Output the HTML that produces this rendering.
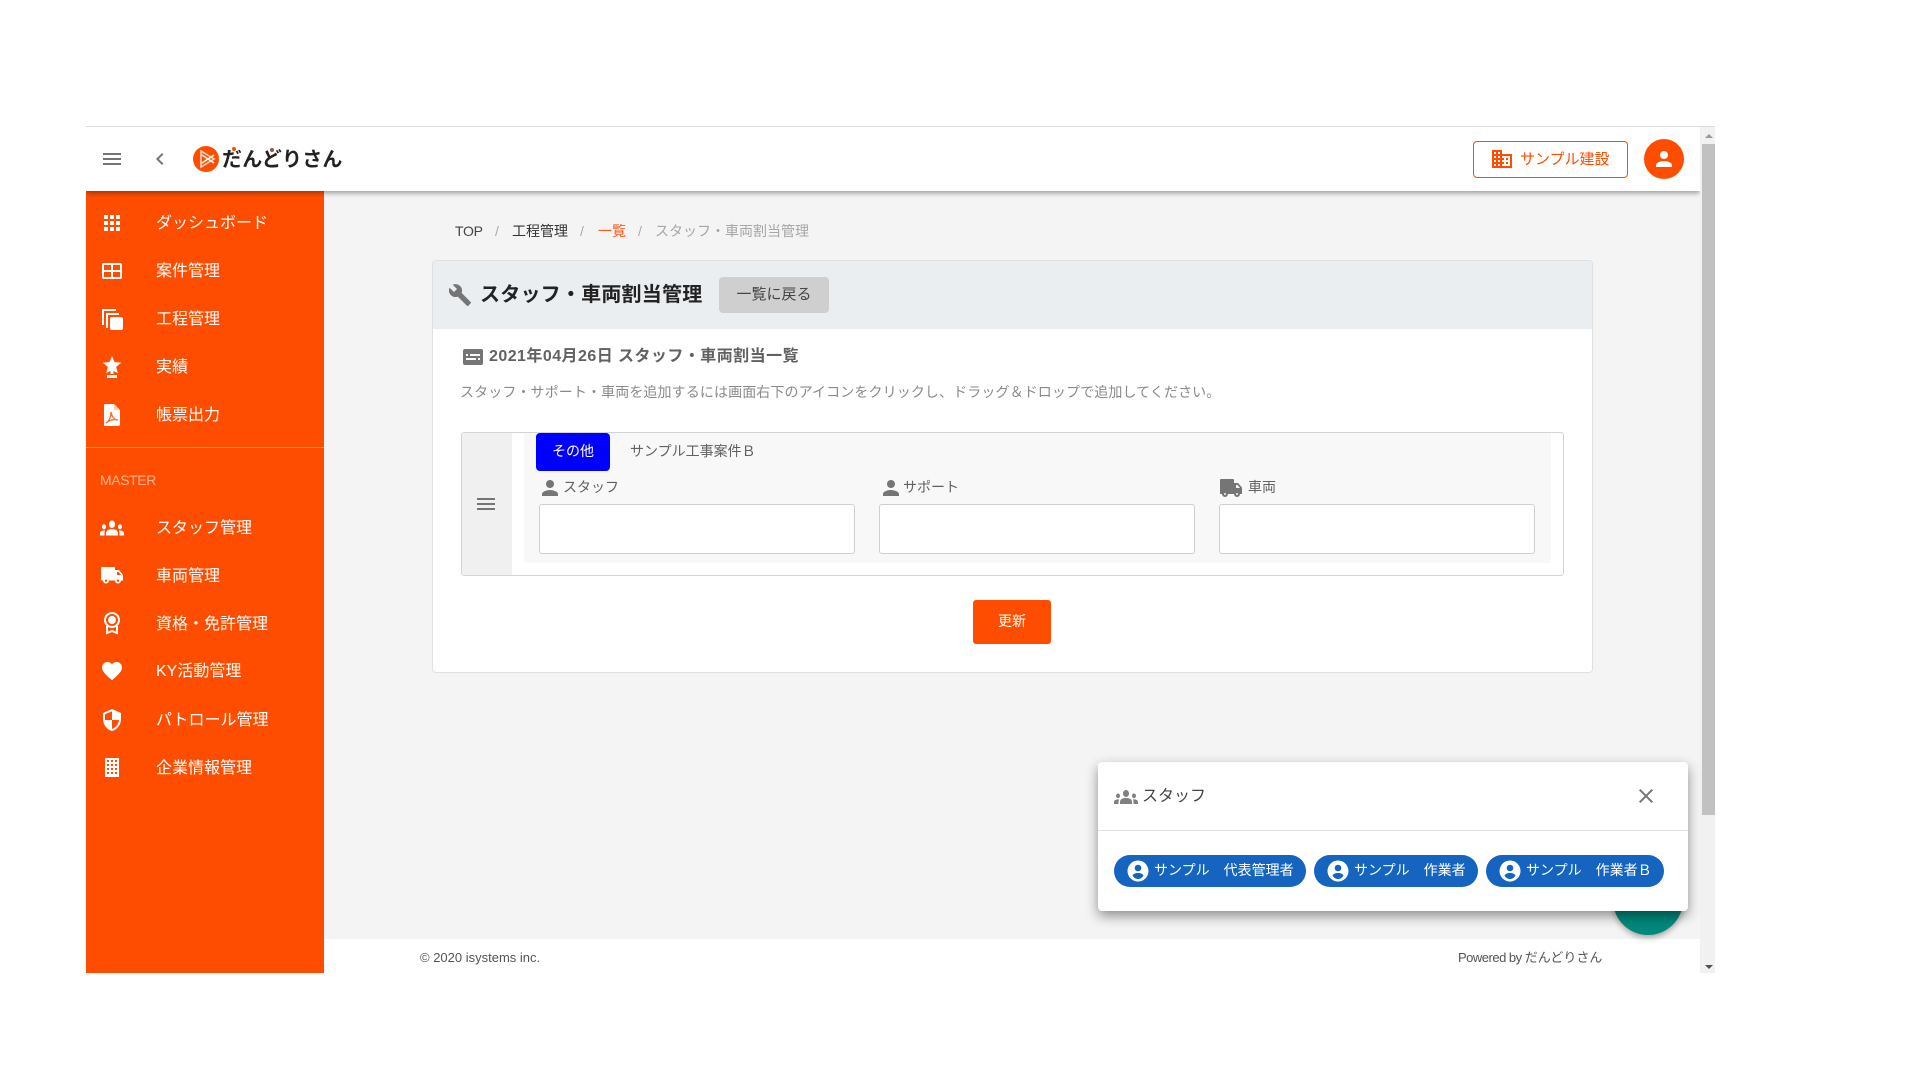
<!DOCTYPE html>
<html lang="ja"><head><meta charset="utf-8"><title>スタッフ・車両割当管理</title>
<style>
html,body{margin:0;padding:0;width:1920px;height:1080px;overflow:hidden;background:#fff}
body{position:relative;font-family:"Liberation Sans","Noto Sans CJK JP",sans-serif;color:#333}
div,span,svg{position:absolute}
.t{white-space:nowrap;line-height:20px;height:20px}
.n{left:156px;color:#fff;font-size:16px}
.i{fill:#fff}
.g{fill:#757575}
i{font-style:normal}
</style></head><body>
<!-- frame -->
<div style="left:86px;top:126px;width:1629px;height:1px;background:#dcdcdc"></div>
<div style="left:324px;top:191px;width:1376px;height:748px;background:#f4f4f4"></div>
<div style="left:324px;top:939px;width:1376px;height:34px;background:#fff"></div>
<!-- scrollbar -->
<div style="left:1700px;top:127px;width:15px;height:846px;background:#f1f1f1"></div>
<div style="left:1702px;top:144px;width:13px;height:671px;background:#c1c1c1"></div>
<div style="left:1705px;top:134px;width:0;height:0;border-left:4px solid transparent;border-right:4px solid transparent;border-bottom:4px solid #9a9a9a"></div>
<div style="left:1705px;top:965px;width:0;height:0;border-left:4px solid transparent;border-right:4px solid transparent;border-top:4px solid #505050"></div>
<!-- sidebar -->
<div style="left:86px;top:191px;width:238px;height:782px;background:#ff4d00"></div>
<div style="left:86px;top:447px;width:238px;height:1px;background:#ff8a5c"></div>
<!-- header -->
<div style="left:86px;top:127px;width:1614px;height:64px;background:#fff;box-shadow:0 2px 5px rgba(0,0,0,.38);clip-path:inset(0 0 -12px 0)"></div>
<svg style="left:100px;top:147px" width="24" height="24" viewBox="0 0 24 24" class="g"><path d="M3 18h18v-2H3v2zm0-5h18v-2H3v2zm0-7v2h18V6H3z"/></svg>
<svg style="left:148px;top:147px" width="24" height="24" viewBox="0 0 24 24" class="g"><path d="M15.41 7.41L14 6l-6 6 6 6 1.41-1.41L10.83 12z"/></svg>
<svg style="left:193px;top:146px" width="26" height="26" viewBox="0 0 26 26"><circle cx="13" cy="13" r="13" fill="#ff4d00"/><path d="M8 5v16l13-8z" fill="none" stroke="#ffd8c4" stroke-width="1.6"/><path d="M9 9l12 8M9 17l12-8" stroke="#fff" stroke-width="1.5"/></svg>
<div class="t" style="left:222px;top:148px;font-size:20px;font-weight:700;color:#222;line-height:24px;height:24px;letter-spacing:.2px">だんどりさん</div>
<div style="left:232px;top:147px;width:4px;height:4px;border-radius:50%;background:#ff4d00"></div>
<div style="left:270px;top:148px;width:4px;height:4px;border-radius:50%;background:#8a5a44"></div>
<div style="left:1473px;top:141px;width:153px;height:35px;border:1px solid #ff4d00;border-radius:4px;background:#fff"></div>
<svg style="left:1490px;top:147px" width="24" height="24" viewBox="0 0 24 24" fill="#ff4d00"><path d="M12 7V3H2v18h20V7H12zM6 19H4v-2h2v2zm0-4H4v-2h2v2zm0-4H4V9h2v2zm0-4H4V5h2v2zm4 12H8v-2h2v2zm0-4H8v-2h2v2zm0-4H8V9h2v2zm0-4H8V5h2v2zm10 12h-8v-2h2v-2h-2v-2h2v-2h-2V9h8v10zm-2-8h-2v2h2v-2zm0 4h-2v2h2v-2z"/></svg>
<div class="t" style="left:1520px;top:150px;font-size:15px;color:#ff4d00">サンプル建設</div>
<div style="left:1644px;top:139px;width:40px;height:40px;border-radius:50%;background:#ff4d00"></div>
<svg style="left:1652px;top:147px" width="24" height="24" viewBox="0 0 24 24" class="i"><path d="M12 12c2.21 0 4-1.79 4-4s-1.79-4-4-4-4 1.79-4 4 1.79 4 4 4zm0 2c-2.67 0-8 1.34-8 4v2h16v-2c0-2.66-5.33-4-8-4z"/></svg>
<!-- nav -->
<svg style="left:100px;top:211px" width="24" height="24" viewBox="0 0 24 24" class="i"><path d="M4 8h4V4H4v4zm6 12h4v-4h-4v4zm-6 0h4v-4H4v4zm0-6h4v-4H4v4zm6 0h4v-4h-4v4zm6-10v4h4V4h-4zm-6 4h4V4h-4v4zm6 6h4v-4h-4v4zm0 6h4v-4h-4v4z"/></svg>
<div class="t n" style="top:214px">ダッシュボード</div>
<svg style="left:100px;top:259px" width="24" height="24" viewBox="0 0 24 24" class="i"><path fill-rule="evenodd" d="M4 4h16a2 2 0 0 1 2 2v12a2 2 0 0 1-2 2H4a2 2 0 0 1-2-2V6a2 2 0 0 1 2-2zm0 2v5h7V6H4zm9 0v5h7V6h-7zM4 13v5h7v-5H4zm9 0v5h7v-5h-7z"/></svg>
<div class="t n" style="top:262px">案件管理</div>
<svg style="left:100px;top:307px" width="24" height="24" viewBox="0 0 24 24" class="i"><path d="M2 2h14v2H4v14H2zM6 6h13v2H8v13H6z"/><rect x="10" y="10" width="13" height="13" rx="2"/></svg>
<div class="t n" style="top:310px">工程管理</div>
<svg style="left:100px;top:355px" width="24" height="24" viewBox="0 0 24 24" class="i"><path d="M12 1l2.600 6.100 6.600.5-5 4.300 1.500 6.400-5.700-3.400-5.700 3.400 1.500-6.400-5-4.300 6.600-.5z"/><path d="M10.500 15h3v4h-3z"/><path d="M7 20h10v3H7z"/></svg>
<div class="t n" style="top:358px">実績</div>
<svg style="left:100px;top:403px" width="24" height="24" viewBox="0 0 24 24"><path d="M5 1h9l6 6v14a2 2 0 0 1-2 2H5a1 1 0 0 1-1-1V2a1 1 0 0 1 1-1z" fill="#fff"/><path d="M14 1v6h6" fill="#ffb899" opacity=".7"/><path d="M6 20c3-2 5-6 5-11 .5 4 3 8 7 8-4-1-9 0-12 3z" fill="none" stroke="#ff6a2b" stroke-width="1.3"/></svg>
<div class="t n" style="top:406px">帳票出力</div>
<div class="t" style="left:100px;top:470px;font-size:14px;color:#ffb395;letter-spacing:-.4px">MASTER</div>
<svg style="left:100px;top:513px" width="24" height="30" viewBox="0 0 24 24" preserveAspectRatio="none" class="i"><path d="M12 12.750c1.630 0 3.070.39 4.240.9 1.080.48 1.760 1.560 1.760 2.730V18H6v-1.610c0-1.180.68-2.260 1.760-2.730 1.170-.52 2.610-.91 4.240-.91zM4 13c1.100 0 2-.9 2-2s-.9-2-2-2-2 .9-2 2 .9 2 2 2zm1.130 1.100c-.37-.06-.74-.1-1.130-.1-.99 0-1.930.21-2.780.58C.48 14.900 0 15.620 0 16.430V18h4.500v-1.610c0-.83.23-1.610.63-2.290zM20 13c1.100 0 2-.9 2-2s-.9-2-2-2-2 .9-2 2 .9 2 2 2zm4 3.430c0-.81-.48-1.530-1.220-1.850-.85-.37-1.790-.58-2.780-.58-.39 0-.76.04-1.130.1.4.68.63 1.460.63 2.290V18H24v-1.570zM12 6c1.660 0 3 1.340 3 3s-1.340 3-3 3-3-1.340-3-3 1.340-3 3-3z"/></svg>
<div class="t n" style="top:519px">スタッフ管理</div>
<svg style="left:100px;top:563px" width="24" height="24" viewBox="0 0 24 24" class="i"><path fill-rule="evenodd" d="M2 4h12a1 1 0 0 1 1 1v2h4l4 5v5.500h-2a3 3 0 0 1-6 0H9a3 3 0 0 1-6 0H2a1 1 0 0 1-1-1V5a1 1 0 0 1 1-1zm15 5v3h4l-2.400-3zM6 16.500a1.200 1.200 0 1 0 0 2.400 1.200 1.200 0 0 0 0-2.400zm12 0a1.200 1.200 0 1 0 0 2.400 1.200 1.200 0 0 0 0-2.400z"/></svg>
<div class="t n" style="top:567px">車両管理</div>
<svg style="left:100px;top:611px" width="24" height="24" viewBox="0 0 24 24" fill="none" stroke="#fff" stroke-width="2"><circle cx="12" cy="9" r="7"/><circle cx="12" cy="9" r="3" fill="#fff"/><path d="M7 15v7l5-2 5 2v-7"/></svg>
<div class="t n" style="top:615px">資格・免許管理</div>
<svg style="left:100px;top:659px" width="24" height="24" viewBox="0 0 24 24" class="i"><path d="M12 21.350l-1.450-1.320C5.400 15.360 2 12.280 2 8.500 2 5.420 4.420 3 7.500 3c1.740 0 3.410.810 4.500 2.090C13.090 3.810 14.760 3 16.500 3 19.580 3 22 5.420 22 8.500c0 3.780-3.400 6.860-8.550 11.540L12 21.350z"/></svg>
<div class="t n" style="top:662px">KY活動管理</div>
<svg style="left:100px;top:708px" width="24" height="24" viewBox="0 0 24 24" class="i"><path d="M12 1L3 5v6c0 5.550 3.840 10.740 9 12 5.160-1.260 9-6.450 9-12V5l-9-4zm0 10.990h7c-.53 4.120-3.280 7.790-7 8.940V12H5V6.300l7-3.110v8.800z"/></svg>
<div class="t n" style="top:711px">パトロール管理</div>
<svg style="left:100px;top:755px" width="24" height="24" viewBox="0 0 24 24" class="i"><path fill-rule="evenodd" d="M5 3h14v19H5zM7 5v2h2V5zm4 0v2h2V5zm4 0v2h2V5zM7 9v2h2V9zm4 0v2h2V9zm4 0v2h2V9zM7 13v2h2v-2zm4 0v2h2v-2zm4 0v2h2v-2zM7 17v2h2v-2zm4 0v2h2v-2zm4 0v2h2v-2z"/></svg>
<div class="t n" style="top:759px">企業情報管理</div>
<!-- breadcrumb -->
<div class="t" style="left:455px;top:221px;font-size:14px;color:#444;letter-spacing:-.3px">TOP</div>
<div class="t" style="left:495px;top:221px;font-size:14px;color:#aaa">/</div>
<div class="t" style="left:512px;top:221px;font-size:14px;color:#333">工程管理</div>
<div class="t" style="left:580px;top:221px;font-size:14px;color:#aaa">/</div>
<div class="t" style="left:598px;top:221px;font-size:14px;color:#ff5a1a">一覧</div>
<div class="t" style="left:638px;top:221px;font-size:14px;color:#aaa">/</div>
<div class="t" style="left:655px;top:221px;font-size:14px;color:#a6a6a6">スタッフ・車両割当管理</div>
<!-- card -->
<div style="left:432px;top:260px;width:1159px;height:411px;background:#fff;border:1px solid #e0e0e0;border-radius:4px"></div>
<div style="left:433px;top:261px;width:1159px;height:68px;background:#ebeef1;border-radius:3px 3px 0 0"></div>
<svg style="left:448px;top:283px" width="24" height="24" viewBox="0 0 24 24" class="g"><path d="M22.700 19l-9.100-9.100c.9-2.300.4-5-1.500-6.900-2-2-5-2.400-7.400-1.300L9 6 6 9 1.600 4.700C.4 7.100.9 10.100 2.900 12.100c1.900 1.900 4.600 2.400 6.900 1.500l9.100 9.100c.4.4 1 .4 1.400 0l2.300-2.300c.5-.4.500-1.100.1-1.400z"/></svg>
<div class="t" style="left:480px;top:285px;font-size:20px;font-weight:700;color:#222;letter-spacing:.22px">スタッフ・車両割当管理</div>
<div style="left:719px;top:277px;width:110px;height:36px;background:#cfcfcf;border-radius:4px"></div>
<div class="t" style="left:719px;top:285px;width:110px;text-align:center;font-size:15px;color:#444">一覧に戻る</div>
<svg style="left:461px;top:345px" width="24" height="24" viewBox="0 0 24 24" class="g"><path fill-rule="evenodd" d="M4 4h16a2 2 0 0 1 2 2v12a2 2 0 0 1-2 2H4a2 2 0 0 1-2-2V6a2 2 0 0 1 2-2zm1 5v2h2V9zm4 0v2h10V9zm-4 4v2h10v-2zm12 0v2h2v-2z"/></svg>
<div class="t" style="left:489px;top:347px;font-size:16px;font-weight:700;color:#616161;letter-spacing:.45px">2021年04月26日 スタッフ・車両割当一覧</div>
<div class="t" style="left:460px;top:382px;font-size:14px;color:#8a8a8a;letter-spacing:.11px">スタッフ・サポート・車両を追加するには画面右下のアイコンをクリックし、ドラッグ＆ドロップで追加してください。</div>
<!-- row -->
<div style="left:461px;top:432px;width:1101px;height:142px;border:1px solid #d4d4d4;border-radius:3px;background:#fff"></div>
<div style="left:462px;top:433px;width:50px;height:142px;background:#f0f0f0"></div>
<svg style="left:474px;top:492px" width="24" height="24" viewBox="0 0 24 24" class="g"><path d="M3 18h18v-2H3v2zm0-5h18v-2H3v2zm0-7v2h18V6H3z"/></svg>
<div style="left:524px;top:433px;width:1027px;height:130px;background:#f8f8f8"></div>
<div style="left:536px;top:433px;width:74px;height:38px;background:#0000ff;border-radius:4px"></div>
<div class="t" style="left:536px;top:441px;width:74px;text-align:center;font-size:14px;color:#fff">その他</div>
<div class="t" style="left:630px;top:441px;font-size:14px;color:#616161">サンプル工事案件Ｂ</div>
<svg style="left:538px;top:476px" width="24" height="24" viewBox="0 0 24 24" class="g"><path d="M12 12c2.210 0 4-1.790 4-4s-1.790-4-4-4-4 1.790-4 4 1.790 4 4 4zm0 2c-2.670 0-8 1.340-8 4v2h16v-2c0-2.660-5.330-4-8-4z"/></svg>
<div class="t" style="left:563px;top:477px;font-size:14px;color:#616161">スタッフ</div>
<svg style="left:879px;top:476px" width="24" height="24" viewBox="0 0 24 24" class="g"><path d="M12 12c2.210 0 4-1.790 4-4s-1.790-4-4-4-4 1.790-4 4 1.790 4 4 4zm0 2c-2.670 0-8 1.340-8 4v2h16v-2c0-2.660-5.330-4-8-4z"/></svg>
<div class="t" style="left:903px;top:477px;font-size:14px;color:#616161">サポート</div>
<svg style="left:1219px;top:476px" width="24" height="24" viewBox="0 0 24 24" class="g"><path fill-rule="evenodd" d="M2 3h12a1 1 0 0 1 1 1v3h4l4 4.500V18h-2a3 3 0 0 1-6 0H9a3 3 0 0 1-6 0H1V4a1 1 0 0 1 1-1zm15 6v3h4l-2.400-3zM6 17a1 1 0 1 0 0 2 1 1 0 0 0 0-2zm12 0a1 1 0 1 0 0 2 1 1 0 0 0 0-2z"/></svg>
<div class="t" style="left:1248px;top:477px;font-size:14px;color:#616161">車両</div>
<div style="left:539px;top:504px;width:314px;height:48px;background:#fff;border:1px solid #cfcfcf;border-radius:3px"></div>
<div style="left:879px;top:504px;width:314px;height:48px;background:#fff;border:1px solid #cfcfcf;border-radius:3px"></div>
<div style="left:1219px;top:504px;width:314px;height:48px;background:#fff;border:1px solid #cfcfcf;border-radius:3px"></div>
<div style="left:973px;top:600px;width:78px;height:44px;background:#ff4d00;border-radius:3px"></div>
<div class="t" style="left:973px;top:611px;width:78px;text-align:center;font-size:14px;color:#fff">更新</div>
<!-- footer -->
<div class="t" style="left:420px;top:948px;font-size:13px;color:#555">© 2020 isystems inc.</div>
<div class="t" style="left:1458px;top:948px;font-size:13px;color:#555"><i style="letter-spacing:-.5px">Powered by </i>だんどりさん</div>
<!-- fab + panel -->
<div style="left:1613px;top:865px;width:70px;height:70px;border-radius:50%;background:#00897b;box-shadow:0 3px 6px rgba(0,0,0,.3)"></div>
<div style="left:1098px;top:762px;width:590px;height:149px;background:#fff;border-radius:4px;box-shadow:0 5px 12px rgba(0,0,0,.42)"></div>
<div style="left:1098px;top:830px;width:590px;height:1px;background:#e0e0e0"></div>
<svg style="left:1114px;top:783px" width="24" height="28" viewBox="0 0 24 24" preserveAspectRatio="none" fill="#808080"><path d="M12 12.750c1.630 0 3.070.39 4.240.9 1.080.48 1.760 1.560 1.760 2.730V18H6v-1.610c0-1.180.68-2.260 1.760-2.730 1.170-.52 2.610-.91 4.240-.91zM4 13c1.100 0 2-.9 2-2s-.9-2-2-2-2 .9-2 2 .9 2 2 2zm1.130 1.100c-.37-.06-.74-.1-1.130-.1-.99 0-1.930.21-2.780.58C.48 14.900 0 15.620 0 16.430V18h4.500v-1.610c0-.83.23-1.610.63-2.290zM20 13c1.100 0 2-.9 2-2s-.9-2-2-2-2 .9-2 2 .9 2 2 2zm4 3.430c0-.81-.48-1.530-1.220-1.850-.85-.37-1.790-.58-2.780-.58-.39 0-.76.04-1.130.1.4.68.63 1.460.63 2.290V18H24v-1.570zM12 6c1.660 0 3 1.340 3 3s-1.340 3-3 3-3-1.340-3-3 1.340-3 3-3z"/></svg>
<div class="t" style="left:1142px;top:787px;font-size:16px;color:#444">スタッフ</div>
<svg style="left:1634px;top:784px" width="24" height="24" viewBox="0 0 24 24" fill="#757575"><path d="M19 6.410L17.590 5 12 10.590 6.410 5 5 6.410 10.590 12 5 17.590 6.410 19 12 13.410 17.590 19 19 17.590 13.410 12z"/></svg>
<div style="left:1114px;top:855px;width:192px;height:32px;border-radius:16px;background:#1565c0"></div>
<svg style="left:1126px;top:859px" width="24" height="24" viewBox="0 0 24 24"><circle cx="12" cy="12" r="10.500" fill="#fff"/><circle cx="12" cy="9" r="3.300" fill="#1565c0"/><path d="M12 14c-2.700 0-5 1-5.500 2.600C7.800 18.600 9.800 20 12 20s4.200-1.400 5.500-3.400C17 15 14.700 14 12 14z" fill="#1565c0"/></svg>
<div class="t" style="left:1154px;top:860px;font-size:14px;color:#fff">サンプル　代表管理者</div>
<div style="left:1314px;top:855px;width:164px;height:32px;border-radius:16px;background:#1565c0"></div>
<svg style="left:1326px;top:859px" width="24" height="24" viewBox="0 0 24 24"><circle cx="12" cy="12" r="10.500" fill="#fff"/><circle cx="12" cy="9" r="3.300" fill="#1565c0"/><path d="M12 14c-2.700 0-5 1-5.500 2.600C7.800 18.600 9.800 20 12 20s4.200-1.400 5.500-3.400C17 15 14.700 14 12 14z" fill="#1565c0"/></svg>
<div class="t" style="left:1354px;top:860px;font-size:14px;color:#fff">サンプル　作業者</div>
<div style="left:1486px;top:855px;width:178px;height:32px;border-radius:16px;background:#1565c0"></div>
<svg style="left:1498px;top:859px" width="24" height="24" viewBox="0 0 24 24"><circle cx="12" cy="12" r="10.500" fill="#fff"/><circle cx="12" cy="9" r="3.300" fill="#1565c0"/><path d="M12 14c-2.700 0-5 1-5.500 2.600C7.800 18.600 9.800 20 12 20s4.200-1.400 5.500-3.400C17 15 14.700 14 12 14z" fill="#1565c0"/></svg>
<div class="t" style="left:1526px;top:860px;font-size:14px;color:#fff">サンプル　作業者Ｂ</div>
</body></html>
